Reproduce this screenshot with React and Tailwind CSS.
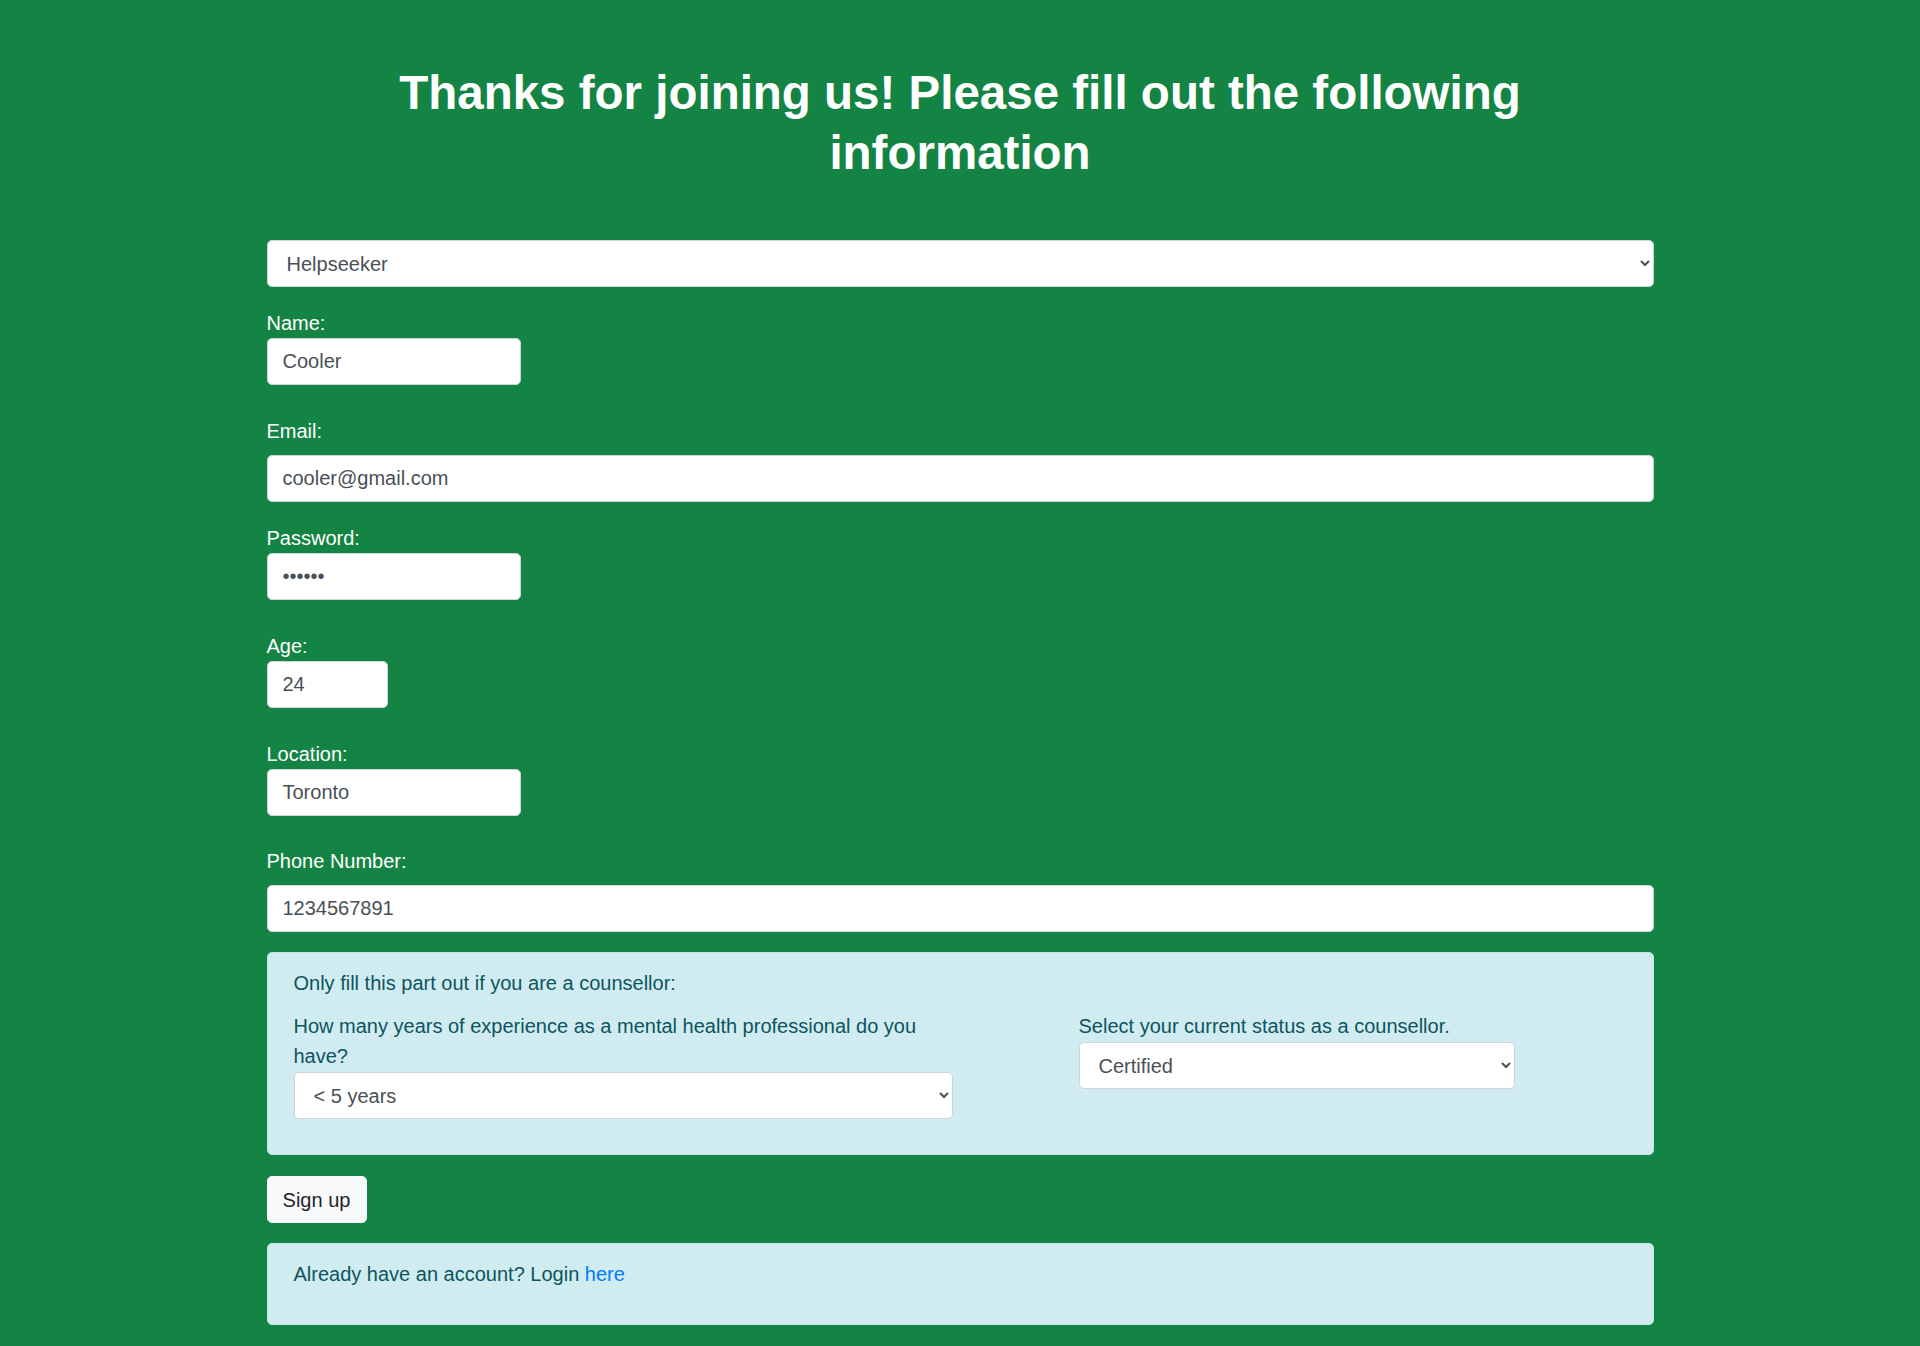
import { useState } from 'react'

const inputClass = "block h-[47px] rounded-[5px] border border-[#ced4da] bg-white px-[15px] text-[20px] leading-[30px] text-[#495057] outline-none"
const labelClass = "block text-[20px] leading-[30px] text-white"

function Field({ label, width, gapTop, gapLabel = 0, ...props }) {
  return (
    <div style={{ marginTop: gapTop }}>
      <label className={labelClass} style={{ marginBottom: gapLabel }}>{label}</label>
      <input {...props} className={`${inputClass} ${width}`} />
    </div>
  )
}

export default function App() {
  const [role, setRole] = useState('helpseeker')
  const [years, setYears] = useState('lt5')
  const [status, setStatus] = useState('certified')

  return (
    <div className="min-h-[1346px] bg-[#148444] font-['Liberation_Sans',Arial,sans-serif]">
      <div className="mx-auto w-[1387px] pt-[63px] pb-[20px]">
        <h1 className="text-center text-[47.5px] font-bold leading-[60px] text-white">
          Thanks for joining us! Please fill out the following information
        </h1>

        <form onSubmit={e => e.preventDefault()} className="mt-[57px]">
          <select value={role} onChange={e => setRole(e.target.value)}
            className={`${inputClass} w-full px-[15px]`}>
            <option value="helpseeker">Helpseeker</option>
            <option value="counsellor">Counsellor</option>
          </select>

          <Field label="Name:" width="w-[254px]" gapTop={21} defaultValue="Cooler" />
          <Field label="Email:" width="w-full" gapTop={31} gapLabel={9} type="email" defaultValue="cooler@gmail.com" />
          <Field label="Password:" width="w-[254px]" gapTop={21} type="password" defaultValue="123456" />
          <Field label="Age:" width="w-[121px]" gapTop={31} type="number" defaultValue="24" />
          <Field label="Location:" width="w-[254px]" gapTop={31} defaultValue="Toronto" />
          <Field label="Phone Number:" width="w-full" gapTop={30} gapLabel={9} defaultValue="1234567891" />

          <div className="mt-[20px] rounded-[5px] border border-[#bee5eb] bg-[#d1ecf1] px-[26px] pt-[15px] pb-[15px] text-[20px] leading-[30px] text-[#0c5460]">
            <p>Only fill this part out if you are a counsellor:</p>
            <div className="mt-[13px] flex gap-[126px]">
              <div className="w-[659px] pb-[20px]">
                <label className="block">How many years of experience as a mental health professional do you have?</label>
                <select value={years} onChange={e => setYears(e.target.value)} className={`${inputClass} mt-px w-full`}>
                  <option value="lt5">&lt; 5 years</option>
                  <option value="5to10">5 - 10 years</option>
                  <option value="gt10">&gt; 10 years</option>
                </select>
              </div>
              <div className="w-[436px]">
                <label className="block">Select your current status as a counsellor.</label>
                <select value={status} onChange={e => setStatus(e.target.value)} className={`${inputClass} mt-px w-full`}>
                  <option value="certified">Certified</option>
                  <option value="student">Student</option>
                </select>
              </div>
            </div>
          </div>

          <button type="submit"
            className="mt-[21px] block h-[47px] w-[100px] rounded-[5px] border border-[#f8f9fa] bg-[#f8f9fa] text-[20px] leading-[30px] text-[#212529]">
            Sign up
          </button>

          <div className="mt-[20px] rounded-[5px] border border-[#bee5eb] bg-[#d1ecf1] px-[26px] pt-[15px] pb-[15px] text-[20px] leading-[30px] text-[#0c5460]">
            <p className="mb-[20px]">Already have an account? Login <a href="#" className="text-[#007bff]">here</a></p>
          </div>
        </form>
      </div>
    </div>
  )
}
